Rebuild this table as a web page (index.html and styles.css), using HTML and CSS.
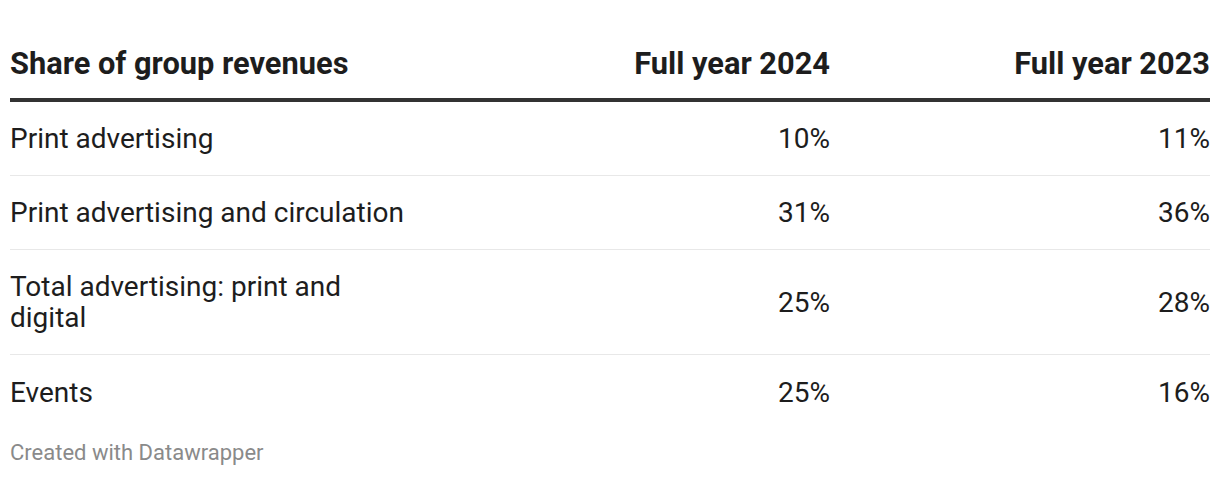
FILE: index.html
```html
<!DOCTYPE html>
<html>
<head>
<meta charset="utf-8">
<link rel="stylesheet" href="styles.css">
</head>
<body>
<div class="chart">
  <table class="tbl">
    <thead>
      <tr>
        <th class="c1">Share of group revenues</th>
        <th class="c2">Full year 2024</th>
        <th class="c3">Full year 2023</th>
      </tr>
    </thead>
    <tbody>
      <tr><td class="c1">Print advertising</td><td class="c2">10%</td><td class="c3">11%</td></tr>
      <tr><td class="c1">Print advertising and circulation</td><td class="c2">31%</td><td class="c3">36%</td></tr>
      <tr><td class="c1">Total advertising: print and digital</td><td class="c2">25%</td><td class="c3">28%</td></tr>
      <tr class="last"><td class="c1">Events</td><td class="c2">25%</td><td class="c3">16%</td></tr>
    </tbody>
  </table>
  <div class="footer">Created with Datawrapper</div>
</div>
</body>
</html>
```
FILE: styles.css
```css
html, body {
  margin: 0;
  padding: 0;
  background: #ffffff;
}
body {
  font-family: Roboto, "Liberation Sans", sans-serif;
  color: #1d1d1d;
}
.chart {
  padding: 28px 10px 0 10px;
}
.tbl {
  width: 1200px;
  border-collapse: collapse;
  table-layout: fixed;
}
.c1 { width: 400px; text-align: left; }
.c2 { width: 420px; text-align: right; }
.c3 { width: 380px; text-align: right; }
th {
  font-size: 30.8px;
  font-weight: 700;
  line-height: 33px;
  padding: 19px 0 18px 0;
  border-bottom: 4px solid #333333;
  vertical-align: bottom;
}
td {
  font-size: 28px;
  font-weight: 400;
  line-height: 31px;
  padding: 21px 0 21px 0;
  border-bottom: 1px solid #e8e8e8;
  vertical-align: middle;
}
tr.last td { border-bottom: none; padding-top: 22px; }
.footer {
  margin-top: 12px;
  font-size: 22px;
  line-height: 24px;
  color: #8a8a8a;
}
```
